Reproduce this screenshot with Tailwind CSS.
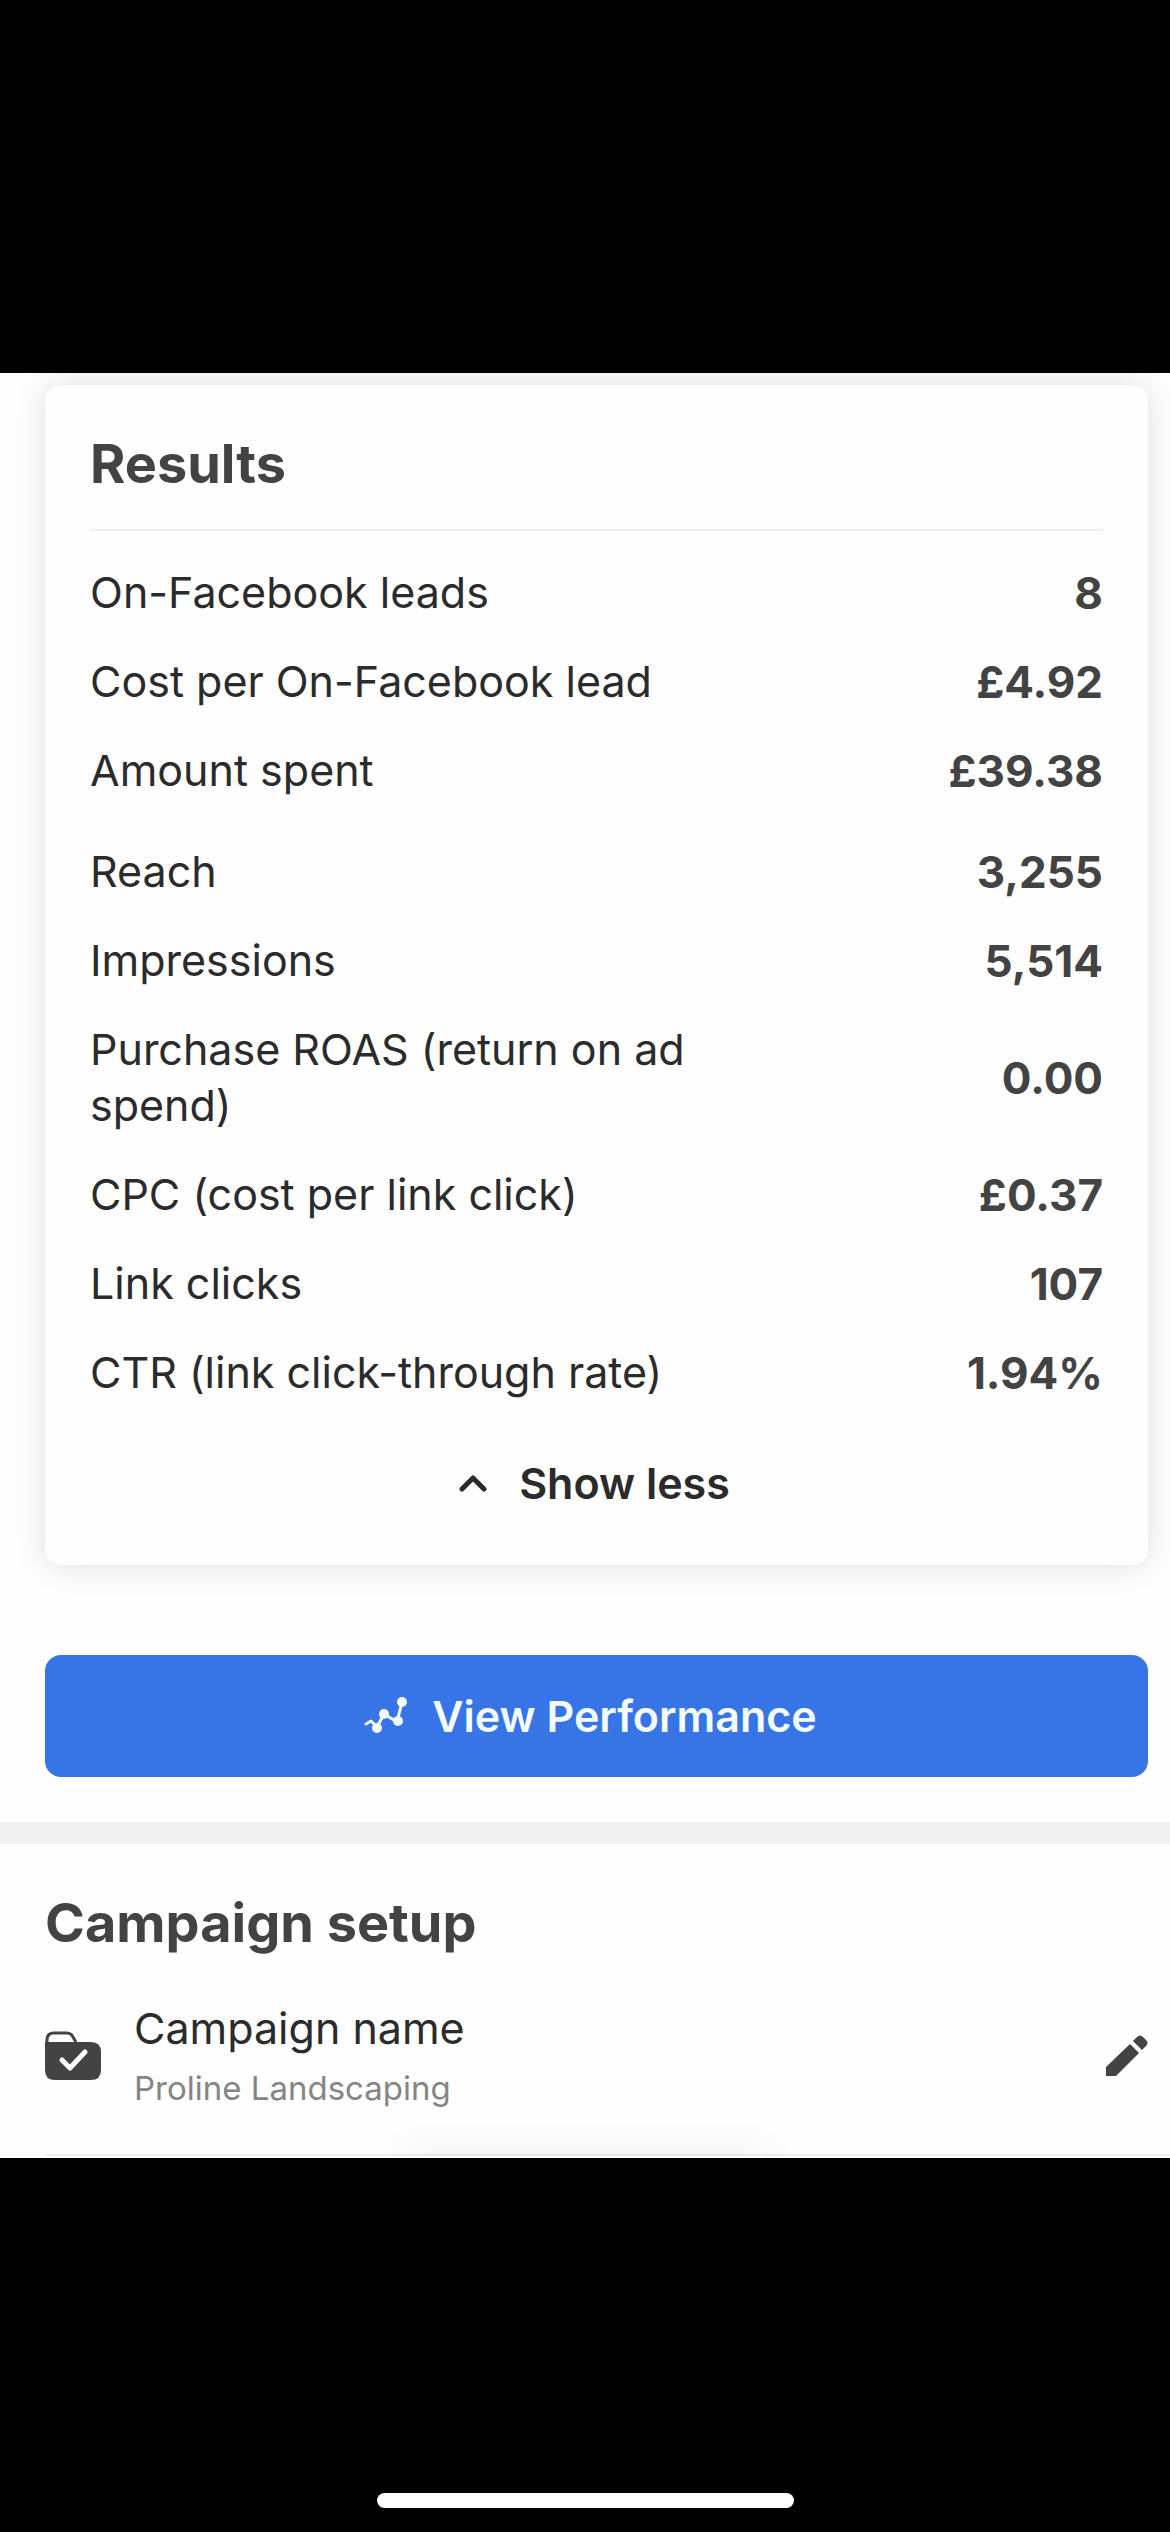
<!DOCTYPE html>
<html lang="en">
<head>
    <meta charset="UTF-8">
    <meta name="viewport" content="width=device-width, initial-scale=1.0">
    <title>Campaign results</title>
    <script src="https://cdn.jsdelivr.net/npm/@tailwindcss/browser@4"></script>
</head>
<body class="bg-black font-['Inter',sans-serif] text-[#2b2b2b] flex flex-col min-h-screen pt-[373px]">
    <main class="bg-[#fefefe] overflow-hidden">
        <!-- Results card -->
        <section class="ml-[45px] mr-[22px] mt-3 px-[45px] pt-11 pb-[54px] rounded-2xl bg-[#fefefe] shadow-[0_0_32px_rgba(0,0,0,0.13)]">
            <h2 class="text-[54px] leading-[70px] font-bold text-[#434343] pb-[30px] border-b-2 border-[#f0f0f0]">Results</h2>
            <table class="w-full mt-[17px] text-[43px] leading-[56px]">
                <tbody>
                    <tr>
                        <th scope="row" class="font-normal text-left pt-4 pb-[17px]">On-Facebook leads</th>
                        <td class="font-bold text-right text-[44px] leading-[56px] text-[#434343]">8</td>
                    </tr>
                    <tr>
                        <th scope="row" class="font-normal text-left pt-4 pb-[17px]">Cost per On-Facebook lead</th>
                        <td class="font-bold text-right text-[44px] leading-[56px] text-[#434343]">£4.92</td>
                    </tr>
                    <tr>
                        <th scope="row" class="font-normal text-left pt-4 pb-[17px]">Amount spent</th>
                        <td class="font-bold text-right text-[44px] leading-[56px] text-[#434343]">£39.38</td>
                    </tr>
                </tbody>
            </table>
            <table class="w-full mt-3 text-[43px] leading-[56px]">
                <tbody>
                    <tr>
                        <th scope="row" class="font-normal text-left w-2/3 pt-4 pb-[17px]">Reach</th>
                        <td class="font-bold text-right text-[44px] leading-[56px] text-[#434343]">3,255</td>
                    </tr>
                    <tr>
                        <th scope="row" class="font-normal text-left pt-4 pb-[17px]">Impressions</th>
                        <td class="font-bold text-right text-[44px] leading-[56px] text-[#434343]">5,514</td>
                    </tr>
                    <tr>
                        <th scope="row" class="font-normal text-left pt-4 pb-[17px]">Purchase ROAS (return on ad spend)</th>
                        <td class="font-bold text-right text-[44px] leading-[56px] text-[#434343]">0.00</td>
                    </tr>
                    <tr>
                        <th scope="row" class="font-normal text-left pt-4 pb-[17px]">CPC (cost per link click)</th>
                        <td class="font-bold text-right text-[44px] leading-[56px] text-[#434343]">£0.37</td>
                    </tr>
                    <tr>
                        <th scope="row" class="font-normal text-left pt-4 pb-[17px]">Link clicks</th>
                        <td class="font-bold text-right text-[44px] leading-[56px] text-[#434343]">107</td>
                    </tr>
                    <tr>
                        <th scope="row" class="font-normal text-left pt-4 pb-[17px]">CTR (link click-through rate)</th>
                        <td class="font-bold text-right text-[44px] leading-[56px] text-[#434343]">1.94%</td>
                    </tr>
                </tbody>
            </table>
            <button type="button" class="flex items-center justify-center gap-8 w-full mt-[38px] pr-1 text-[43px] leading-[56px] font-semibold">
                <svg class="w-7 h-5" viewBox="0 0 28 20" fill="none" stroke="currentColor" stroke-width="5" stroke-linecap="round" stroke-linejoin="round" aria-hidden="true">
                    <path d="M3 16 14 5l11 11"/>
                </svg>
                Show less
            </button>
        </section>

        <!-- Main action -->
        <div class="ml-[45px] mr-[22px] mt-[90px]">
            <button type="button" class="flex items-center justify-center gap-6 w-full h-[122px] pr-3 rounded-2xl bg-[#3774e6] text-[#f5fcff] text-[43px] leading-[56px] font-semibold">
                <svg class="w-11 h-10" viewBox="0 0 44 40" fill="none" stroke="currentColor" stroke-width="3" stroke-linecap="round" stroke-linejoin="round" aria-hidden="true">
                    <path d="M2 28l5-3 6 6 7-13 13 8 5-20"/>
                    <g fill="currentColor" stroke="none">
                        <circle cx="13" cy="32" r="5"/>
                        <circle cx="20" cy="18" r="5"/>
                        <circle cx="34" cy="25" r="5"/>
                        <circle cx="38" cy="6" r="5"/>
                    </g>
                </svg>
                View Performance
            </button>
        </div>

        <!-- Campaign setup -->
        <section class="mt-[45px] border-t-[22px] border-[#f1f1f1] pt-11">
            <h2 class="ml-[45px] text-[54px] leading-[70px] font-bold text-[#434343]">Campaign setup</h2>
            <div class="flex items-center ml-[45px] mt-[42px] pr-[22px] pb-[42px] border-b-2 border-[#eeeeee]">
                <svg class="w-14 h-[50px] text-[#434343]" viewBox="0 0 56 50" fill="none" stroke="currentColor" aria-hidden="true">
                    <path d="M2 18V9q0-7 7-7h13q4 0 6 4l3 5" stroke-width="3"/>
                    <path d="M0 11h46q10 0 10 10v18q0 10-10 10H10Q0 49 0 39z" fill="currentColor" stroke="none"/>
                    <path d="M17 29l8 8 15-16" stroke="#fefefe" stroke-width="5" stroke-linecap="round" stroke-linejoin="round"/>
                </svg>
                <div class="ml-[33px] flex-1">
                    <p class="text-[43px] leading-[56px]">Campaign name</p>
                    <p class="mt-2 text-[33px] leading-[48px] text-[#858585]">Proline Landscaping</p>
                </div>
                <button type="button" aria-label="Edit campaign name">
                    <svg class="w-[42px] h-[42px] text-[#434343]" viewBox="0 0 42 42" fill="currentColor" aria-hidden="true">
                        <path d="M0 41V32L24 9l9 9L10 41z"/>
                        <path d="M27 6l4-4q3-3 6 0l3 3q3 3 0 6l-4 4z"/>
                    </svg>
                </button>
            </div>
            <div class="w-[360px] h-[2px] mx-auto shadow-[0_0_32px_8px_rgba(0,0,0,0.06)]"></div>
        </section>
    </main>

    <!-- Home indicator -->
    <footer class="flex-1 flex items-end justify-center pb-6">
        <div class="w-[417px] h-[15px] rounded-full bg-white"></div>
    </footer>
</body>
</html>
